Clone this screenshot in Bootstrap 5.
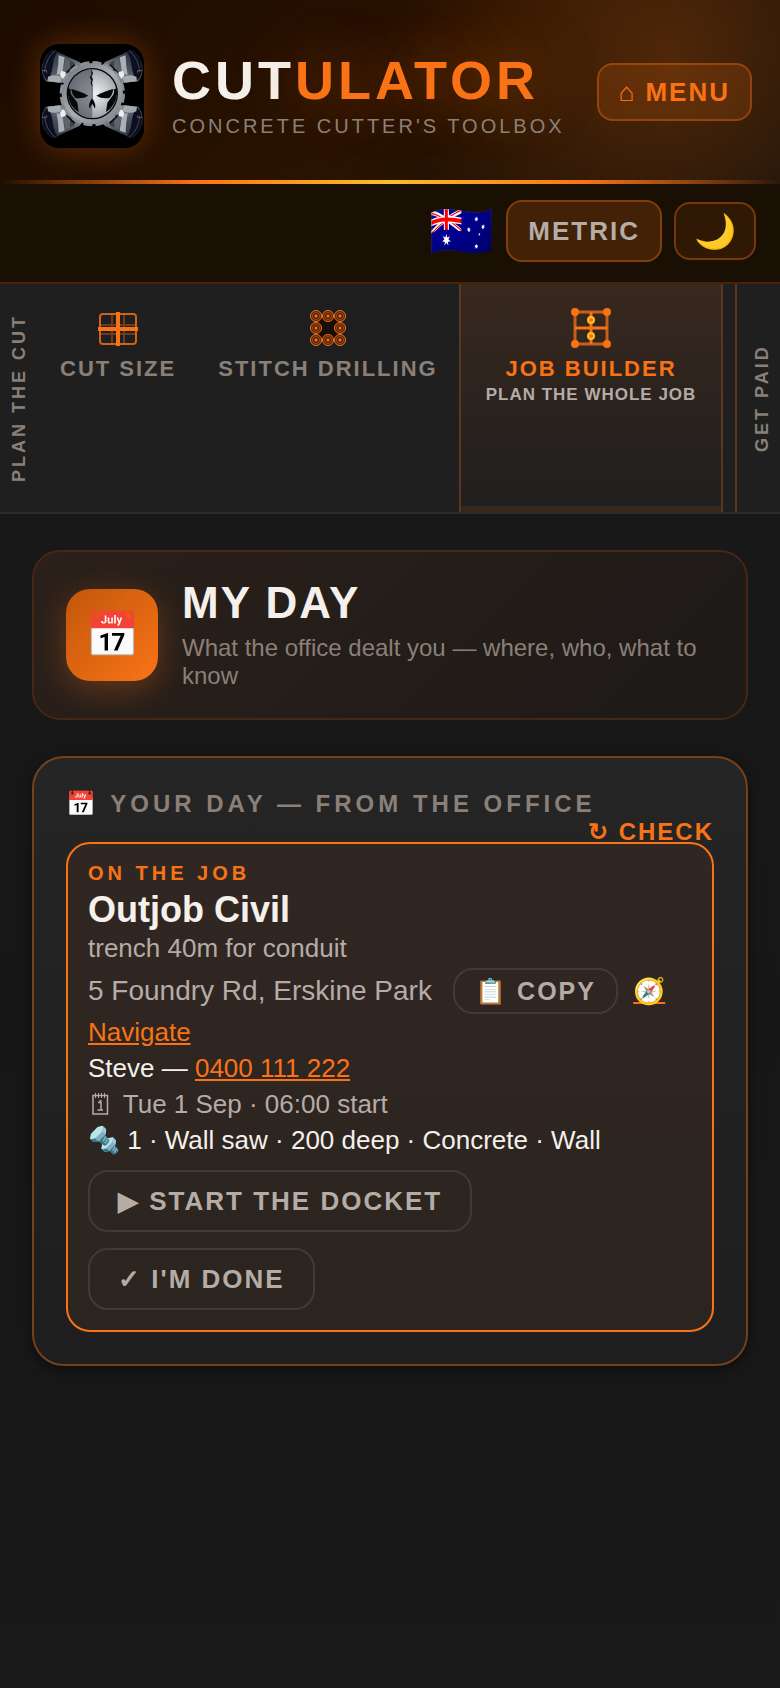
<!DOCTYPE html>
<html lang="en">
<head>
<meta charset="utf-8">
<meta name="viewport" content="width=device-width, initial-scale=1">
<title>Cutulator – My Day</title>
<link rel="stylesheet" href="https://cdn.jsdelivr.net/npm/bootstrap@5.3.0/dist/css/bootstrap.min.css">
<style>
  :root { --hot: #f97316; --amber: #fbbf24; --ink: #f5f0eb; --soft: #b5aca6; --dim: #8a8078; }
  body { background: linear-gradient(180deg, #1a1a1a, #171717 60%, #191919); min-height: 100vh; color: var(--ink);
    font-family: "Liberation Sans", Arial, sans-serif; font-size: 26px; line-height: 36px; }
  button { font-family: inherit; }
  a, a:hover { color: var(--hot); }

  .masthead { position: relative; min-height: 184px; padding: 0 28px 0 40px;
    background: radial-gradient(circle 270px at 86% 32%, rgba(249,115,22,.22), rgba(249,115,22,0)),
      linear-gradient(135deg, #1c0b00, #2a1300 50%, #161009); }
  .masthead::after { content: ""; position: absolute; left: 0; right: 0; bottom: 0; height: 4px;
    background: linear-gradient(90deg, transparent, var(--hot) 25%, var(--amber) 50%, var(--hot) 75%, transparent); }
  .logo-tile { width: 104px; height: 104px; border-radius: 20px; overflow: hidden; background: #000;
    box-shadow: 0 0 32px rgba(249,115,22,.3); }
  .logo-tile svg { display: block; width: 100%; height: 100%; }
  .brand-name { font-size: 54px; line-height: 56px; font-weight: 700; letter-spacing: 4px; margin: 0 0 4px; }
  .brand-name span { color: var(--hot); text-shadow: 0 0 60px rgba(249,115,22,.5); }
  .brand-tag { font-size: 20px; line-height: 28px; letter-spacing: 3px; color: var(--dim); margin: 0; }

  .pill { border: 2px solid rgba(249,115,22,.35); border-radius: 16px; background: rgba(249,115,22,.15);
    font-size: 26px; line-height: 30px; font-weight: 700; letter-spacing: 2px; padding: 12px 20px; color: var(--soft); }
  .pill-menu { color: var(--hot); }
  .pill-units { padding: 14px 20px; background: rgba(249,115,22,.18); }
  .pill-moon { font-size: 34px; font-weight: 400; letter-spacing: 0; padding: 12px 18px; background: rgba(249,115,22,.1); }
  .flag-btn { font-size: 52px; line-height: 60px; padding: 0; border: 0; background: none; }
  .toolbar { background: #1a0f03; border-bottom: 2px solid #472307; padding: 16px 24px 20px; gap: 12px; }

  .tabstrip { background: #1f1f1f; border-bottom: 2px solid #2b2b2b; height: 230px; overflow: hidden; }
  .group-label { writing-mode: vertical-rl; transform: rotate(180deg); text-align: center; width: 39px;
    font-size: 18px; line-height: 39px; font-weight: 700; letter-spacing: 3px; color: var(--dim); white-space: nowrap; }
  .tool-tab { border: 0; background: none; color: var(--dim); padding: 24px 21px 0; font-weight: 700; font-size: 22px;
    line-height: 26px; letter-spacing: 2px; white-space: nowrap; text-align: center; }
  .tool-tab svg { display: block; width: 40px; height: 40px; margin: 0 auto 8px; }
  .tool-tab small { display: block; font-size: 17px; line-height: 26px; letter-spacing: 1px; color: var(--soft); }
  .tool-tab.active { color: var(--hot); border: solid #5e361d; border-width: 0 2px; padding: 24px 25px 0;
    background: linear-gradient(#38281e, #1f1f1f); box-shadow: inset 0 -6px #38271d; }
  .group-next { border-left: 2px solid #5e361d; margin-left: 12px; padding-left: 6px; }

  .page { padding: 36px 32px; }
  .hero { border: 2px solid #432717; border-radius: 28px; padding: 28px 32px; gap: 24px;
    background: linear-gradient(135deg, #2b201a, #1d1a18); }
  .hero-icon { width: 92px; height: 92px; border-radius: 24px; font-size: 44px; line-height: 92px;
    background: linear-gradient(135deg, #c2570c, #f97316); box-shadow: 0 8px 32px rgba(249,115,22,.3); }
  .hero-title { font-size: 44px; line-height: 46px; font-weight: 700; letter-spacing: 2px; margin: 0; }
  .hero-text { font-size: 24px; line-height: 28px; color: var(--dim); margin: 8px 0 0; }

  .day-panel { margin-top: 36px; border: 2px solid #77401c; border-radius: 32px; padding: 32px 32px;
    background: linear-gradient(#252525, #1e1e1e); box-shadow: 0 4px 12px rgba(0,0,0,.5); }
  .panel-title { font-size: 24px; line-height: 28px; font-weight: 700; letter-spacing: 4px; color: var(--dim); margin: 0 0 4px; }
  .check-btn { border: 0; background: none; padding: 0; color: var(--hot); font-size: 24px; line-height: 20px;
    font-weight: 700; letter-spacing: 2px; }
  .job { border: 2px solid var(--hot); border-radius: 24px; padding: 18px 20px 20px; background: linear-gradient(#302723, #2c241f); }
  .job-state { font-size: 20px; line-height: 22px; font-weight: 700; letter-spacing: 4px; color: var(--hot); }
  .job-client { font-size: 36px; line-height: 44px; font-weight: 700; margin: 4px 0 0; }
  .job-task { line-height: 32px; margin-bottom: 4px; }
  .softly { color: var(--soft); }
  .address { font-size: 28px; }
  .cal-icon { width: 24px; height: 26px; margin-right: 4px; vertical-align: -4px; }
  .ghost { border: 2px solid #433a35; border-radius: 20px; background: none; color: var(--soft); font-size: 26px;
    line-height: 30px; font-weight: 700; letter-spacing: 2px; padding: 14px 28px; }
  .ghost-sm { font-size: 25px; padding: 6px 20px; margin: 0 8px 0 14px; }
</style>
</head>
<body>
<header class="masthead d-flex align-items-center justify-content-between">
  <div class="d-flex align-items-center pt-2">
    <div class="logo-tile flex-shrink-0">
      <svg viewBox="0 0 312 312" role="img" aria-label="Cutulator skull">
        <defs>
          <linearGradient id="steel" x1="0" y1="0" x2="1" y2="1">
            <stop offset="0" stop-color="#15192a"/><stop offset=".45" stop-color="#4a515c"/><stop offset=".7" stop-color="#7d858d"/><stop offset="1" stop-color="#22252b"/>
          </linearGradient>
          <linearGradient id="gear" x1="0" y1="0" x2="1" y2="1">
            <stop offset="0" stop-color="#6a7076"/><stop offset=".5" stop-color="#a9aeb3"/><stop offset="1" stop-color="#7b8086"/>
          </linearGradient>
          <radialGradient id="bone" cx=".55" cy=".5" r=".6">
            <stop offset="0" stop-color="#f0f2f3"/><stop offset=".5" stop-color="#c0c4c7"/><stop offset="1" stop-color="#8a8f94"/>
          </radialGradient>
          <g id="drill">
            <path d="M40 17 L66 30 L118 54 L132 70 L86 118 L62 116 L18 112 Q2 92 6 64 Q14 30 40 17Z" fill="url(#steel)"/>
            <path d="M40 18 Q10 36 7 72 Q8 98 22 110 Q34 96 38 66 Q42 36 52 24Z" fill="#0b0f20"/>
            <path d="M46 20 Q16 44 14 84" fill="none" stroke="#5d6878" stroke-width="2"/>
            <path d="M56 34 L74 40 L70 66 L66 90 L50 92 Q56 64 56 34Z" fill="#a9b0b7"/>
            <path d="M76 42 L88 48 L84 78 L72 84Z" fill="#5c636b"/>
            <path d="M90 50 L104 56 L90 76Z" fill="#3c4249"/>
            <path d="M24 98 Q44 88 66 100 L60 116 L22 112Z" fill="#a5abb1"/>
            <path d="M64 80 l12 4 2 16 -10 4 -8 -10z" fill="#eceff0"/>
            <path d="M80 86 L104 62" stroke="#0b0d12" stroke-width="6"/>
            <path d="M6 80 h14 v6" fill="none" stroke="#b8705a" stroke-width="2"/>
          </g>
          <g id="drillPair"><use href="#drill"/><use href="#drill" transform="translate(0 300) scale(1 -1)"/></g>
        </defs>
        <rect width="312" height="312" fill="#000"/>
        <use href="#drillPair"/>
        <use href="#drillPair" transform="translate(313 0) scale(-1 1)"/>
        <circle cx="157" cy="149" r="92" fill="url(#gear)"/>
        <circle cx="157" cy="149" r="94" fill="none" stroke="#8b9096" stroke-width="8" stroke-dasharray="27 9.9"/>
        <circle cx="157" cy="149" r="77" fill="#050505"/>
        <circle cx="157" cy="149" r="73" fill="url(#bone)"/>
        <path d="M157 76 A73 73 0 0 0 157 222Z" fill="#4a5056" opacity=".6"/>
        <g fill="#080808">
          <path d="M83 132 L92 136 Q90 150 100 160 L112 176 L116 204 Q88 188 83 150Z"/>
          <path d="M94 135 Q116 140 145 155 Q130 165 106 162 Q96 152 94 135Z"/>
          <path d="M231 132 L222 136 Q224 150 214 160 L202 176 L198 204 Q226 188 231 150Z"/>
          <path d="M220 135 Q198 140 169 155 Q184 165 208 162 Q218 152 220 135Z"/>
          <path d="M156 162 Q143 182 149 194 L156 180 L157 180 L165 194 Q169 180 156 162Z"/>
          <path d="M154 76 l5 12 -5 10 5 8 -3 10 1 12 -5 -10 2 -10 -5 -8 5 -8z"/>
        </g>
        <path d="M157 120 V162" stroke="#3a3f44" stroke-width="2"/>
      </svg>
    </div>
    <div class="ms-4 ps-1">
      <h1 class="brand-name">CUT<span>ULATOR</span></h1>
      <p class="brand-tag">CONCRETE CUTTER'S TOOLBOX</p>
    </div>
  </div>
  <button type="button" class="pill pill-menu text-nowrap">⌂ MENU</button>
</header>

<div class="toolbar d-flex align-items-center justify-content-end">
  <button type="button" class="flag-btn" aria-label="Country">🇦🇺</button>
  <button type="button" class="pill pill-units">METRIC</button>
  <button type="button" class="pill pill-moon" aria-label="Dark mode">🌙</button>
</div>

<nav class="tabstrip d-flex" aria-label="Tools">
  <div class="group-label flex-shrink-0">PLAN THE CUT</div>
  <button type="button" class="tool-tab d-flex flex-column align-items-center flex-shrink-0">
    <svg viewBox="0 0 40 40" fill="none" stroke="#f97316">
      <path d="M14 6V36M26 6V36M2 17H38M2 26H38" stroke-width="2" opacity=".35"/>
      <rect x="2" y="6" width="36" height="30" rx="3" stroke-width="2" opacity=".8"/>
      <path d="M20 4V38M0 21H40" stroke-width="4"/>
    </svg>
    CUT SIZE
  </button>
  <button type="button" class="tool-tab d-flex flex-column align-items-center flex-shrink-0">
    <svg viewBox="0 0 40 40">
      <defs>
        <g id="hole"><circle r="5.5" fill="#4d220a" stroke="#f97316" stroke-width="1"/><circle r="3.5" fill="none" stroke="#f97316" stroke-width="1" opacity=".5"/><circle r="1.5" fill="#f97316"/></g>
      </defs>
      <rect x="8" y="8" width="24" height="24" fill="#1a0d05" stroke="#f97316" stroke-width="2"/>
      <use href="#hole" x="8" y="8"/><use href="#hole" x="20" y="8"/><use href="#hole" x="32" y="8"/>
      <use href="#hole" x="8" y="20"/><use href="#hole" x="32" y="20"/>
      <use href="#hole" x="8" y="32"/><use href="#hole" x="20" y="32"/><use href="#hole" x="32" y="32"/>
    </svg>
    STITCH DRILLING
  </button>
  <button type="button" class="tool-tab active d-flex flex-column align-items-center flex-shrink-0" aria-current="page">
    <svg viewBox="0 0 40 40" fill="none" stroke="#f97316">
      <rect x="4" y="4" width="32" height="32" stroke-width="3" opacity=".75"/>
      <path d="M20 4V36M4 20H36" stroke-width="3"/>
      <g fill="#f97316" stroke="none"><circle cx="4" cy="4" r="4"/><circle cx="36" cy="4" r="4"/><circle cx="4" cy="36" r="4"/><circle cx="36" cy="36" r="4"/></g>
      <g fill="#f97316" stroke="#fbbf24" stroke-width="2"><circle cx="20" cy="12" r="3"/><circle cx="20" cy="28" r="3"/></g>
    </svg>
    JOB BUILDER
    <small>PLAN THE WHOLE JOB</small>
  </button>
  <div class="group-next d-flex flex-shrink-0"><div class="group-label">GET PAID</div></div>
</nav>

<main class="page">
  <section class="hero d-flex align-items-center">
    <div class="hero-icon flex-shrink-0 text-center">📅</div>
    <div>
      <h2 class="hero-title">MY DAY</h2>
      <p class="hero-text">What the office dealt you — where, who, what to know</p>
    </div>
  </section>

  <section class="day-panel">
    <h3 class="panel-title">📅 YOUR DAY — FROM THE OFFICE</h3>
    <div class="d-flex justify-content-end"><button type="button" class="check-btn">↻ CHECK</button></div>
    <article class="job">
      <div class="job-state">ON THE JOB</div>
      <h4 class="job-client">Outjob Civil</h4>
      <div class="job-task softly">trench 40m for conduit</div>
      <div><span class="address softly">5 Foundry Rd, Erskine Park</span> <button type="button" class="ghost ghost-sm">📋 COPY</button> <a href="#navigate">🧭 Navigate</a></div>
      <div>Steve — <a href="tel:0400111222">0400 111 222</a></div>
      <div class="softly"><svg class="cal-icon" viewBox="0 0 24 26" fill="none" stroke="#b5aca6" aria-hidden="true"><path d="M5 4.500H19.500V23H5Z" stroke-width="1.500"/><path d="M7.500 2V7M10.500 2V7M13.500 2V7M16.500 2V7" stroke-width="1"/><path d="M10 11.500H13V18.500M9.500 19H15" stroke-width="1.500"/><path d="M12.500 9V11" stroke-width="2"/></svg> Tue 1 Sep · 06:00 start</div>
      <div>🔩 1 · Wall saw · 200 deep · Concrete · Wall</div>
      <div class="d-flex flex-column align-items-start gap-3 mt-2 pt-1">
        <button type="button" class="ghost">▶ START THE DOCKET</button>
        <button type="button" class="ghost">✓ I'M DONE</button>
      </div>
    </article>
  </section>
</main>
<script src="https://cdn.jsdelivr.net/npm/bootstrap@5.3.0/dist/js/bootstrap.bundle.min.js"></script>
</body>
</html>
